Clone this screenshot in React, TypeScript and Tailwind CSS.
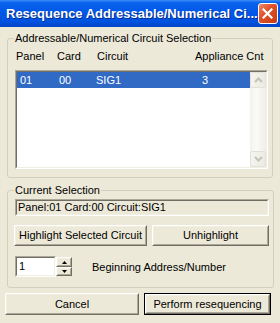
import React from "react";

const Raised: React.FC<{ className?: string; children?: React.ReactNode; isDefault?: boolean }> = ({ className = "", children, isDefault }) => {
  const inner = (
    <div className="w-full h-full border border-t-white border-l-white border-r-[#716F64] border-b-[#716F64]">
      <div className="w-full h-full flex items-center justify-center border border-t-[#F1EFE2] border-l-[#F1EFE2] border-r-[#ACA899] border-b-[#ACA899]">
        {children}
      </div>
    </div>
  );
  if (isDefault) {
    return <div className={`border border-black ${className}`}>{inner}</div>;
  }
  return <div className={className}>{inner}</div>;
};

const Sunken: React.FC<{ className?: string; innerClass?: string; children?: React.ReactNode }> = ({ className = "", innerClass = "", children }) => (
  <div className={`border border-t-[#ACA899] border-l-[#ACA899] border-r-white border-b-white ${className}`}>
    <div className={`w-full h-full border border-t-[#716F64] border-l-[#716F64] border-r-[#F1EFE2] border-b-[#F1EFE2] ${innerClass}`}>
      {children}
    </div>
  </div>
);

const ScrollBtn: React.FC<{ up?: boolean }> = ({ up }) => (
  <div className="h-[16px] w-[16px] flex items-center justify-center rounded-[2px] border border-[#E2E1D6] bg-[linear-gradient(to_right,#F4F3EE,#ECEBE3)]">
    <svg width="9" height="6" viewBox="0 0 9 6">
      {up ? (
        <polyline points="1,5 4.5,1.5 8,5" fill="none" stroke="#C4C3B8" strokeWidth="2" />
      ) : (
        <polyline points="1,1 4.5,4.5 8,1" fill="none" stroke="#C4C3B8" strokeWidth="2" />
      )}
    </svg>
  </div>
);

export default function App() {
  return (
    <div className="w-[280px] h-[323px] overflow-hidden bg-[#ECE9D8] text-black text-[11px] leading-[13px] font-['Liberation_Sans',Arial,sans-serif] flex flex-col">
      {/* Title bar */}
      <div className="h-[27px] shrink-0 flex items-center pl-[6px] pr-[2px] bg-[linear-gradient(to_bottom,#3D8DF7_0%,#0A62EC_10%,#0058E8_45%,#0053E0_80%,#0044C4_100%)]">
        <span className="text-white font-bold text-[13px] leading-[15px] [text-shadow:1px_1px_0_#0A2A8A] whitespace-nowrap">
          Resequence Addressable/Numerical Ci...
        </span>
        <div className="ml-auto w-[21px] h-[21px] rounded-[3px] border border-white bg-[linear-gradient(135deg,#EE8A6A_0%,#E0522A_40%,#C83A12_100%)] flex items-center justify-center">
          <svg width="11" height="11" viewBox="0 0 11 11">
            <path d="M1.5 1.5 L9.5 9.5 M9.5 1.5 L1.5 9.5" stroke="white" strokeWidth="2.2" strokeLinecap="square" />
          </svg>
        </div>
      </div>

      {/* Group 1 */}
      <fieldset className="mx-[7px] mt-[5px] border border-[#D0D0BF] rounded-[3px] pl-[7px] pr-[4px] pb-[8px]">
        <legend className="ml-[-1px] px-[1px] leading-[13px]">Addressable/Numerical Circuit Selection</legend>
        <div className="mt-[5px] h-[13px] flex pl-[1px] whitespace-nowrap">
          <span className="w-[41px]">Panel</span>
          <span className="w-[40px]">Card</span>
          <span className="w-[98px]">Circuit</span>
          <span>Appliance Cnt</span>
        </div>
        <Sunken className="mt-[7px] h-[99px]" innerClass="bg-white flex">
          <div className="flex-1 flex flex-col">
            <div className="h-[16px] flex items-center bg-[#316AC5] text-white pl-[3px] whitespace-nowrap">
              <span className="w-[39px]">01</span>
              <span className="w-[37px]">00</span>
              <span className="w-[106px]">SIG1</span>
              <span>3</span>
            </div>
          </div>
          <div className="w-[16px] flex flex-col bg-[linear-gradient(to_right,#F3F2EC,#FBFAF6_40%,#EEEDE6)]">
            <ScrollBtn up />
            <div className="flex-1" />
            <ScrollBtn />
          </div>
        </Sunken>
      </fieldset>

      {/* Group 2 */}
      <fieldset className="mx-[7px] mt-[6px] border border-[#D0D0BF] rounded-[3px] pl-[7px] pr-[4px] pb-[10px]">
        <legend className="ml-[-1px] px-[1px] leading-[13px]">Current Selection</legend>
        <Sunken className="mt-[2px] h-[17px]" innerClass="flex items-center pl-[1px] whitespace-nowrap">
          Panel:01 Card:00 Circuit:SIG1
        </Sunken>
        <div className="mt-[9px] flex gap-[5px] ml-[-1px]">
          <Raised className="w-[133px] h-[21px]">Highlight Selected Circuit</Raised>
          <Raised className="w-[117px] h-[21px]">Unhighlight</Raised>
        </div>
        <div className="mt-[10px] h-[21px] flex items-center">
          <Sunken className="w-[41px] h-[21px]" innerClass="bg-white flex items-center pl-[2px]">
            1
          </Sunken>
          <div className="w-[17px] h-[21px] flex flex-col py-[1px]">
            <Raised className="h-[10px] w-[16px]">
              <svg width="5" height="3" viewBox="0 0 5 3"><polygon points="0,3 2.5,0 5,3" fill="black" /></svg>
            </Raised>
            <Raised className="h-[9px] w-[16px]">
              <svg width="5" height="3" viewBox="0 0 5 3"><polygon points="0,0 5,0 2.5,3" fill="black" /></svg>
            </Raised>
          </div>
          <span className="ml-[19px] mt-[2px] whitespace-nowrap">Beginning Address/Number</span>
        </div>
      </fieldset>

      {/* Bottom buttons */}
      <div className="mt-[5px] mx-[5px] flex gap-[5px]">
        <Raised className="w-[134px] h-[22px]">Cancel</Raised>
        <Raised isDefault className="w-[127px] h-[22px]">Perform resequencing</Raised>
      </div>
    </div>
  );
}
